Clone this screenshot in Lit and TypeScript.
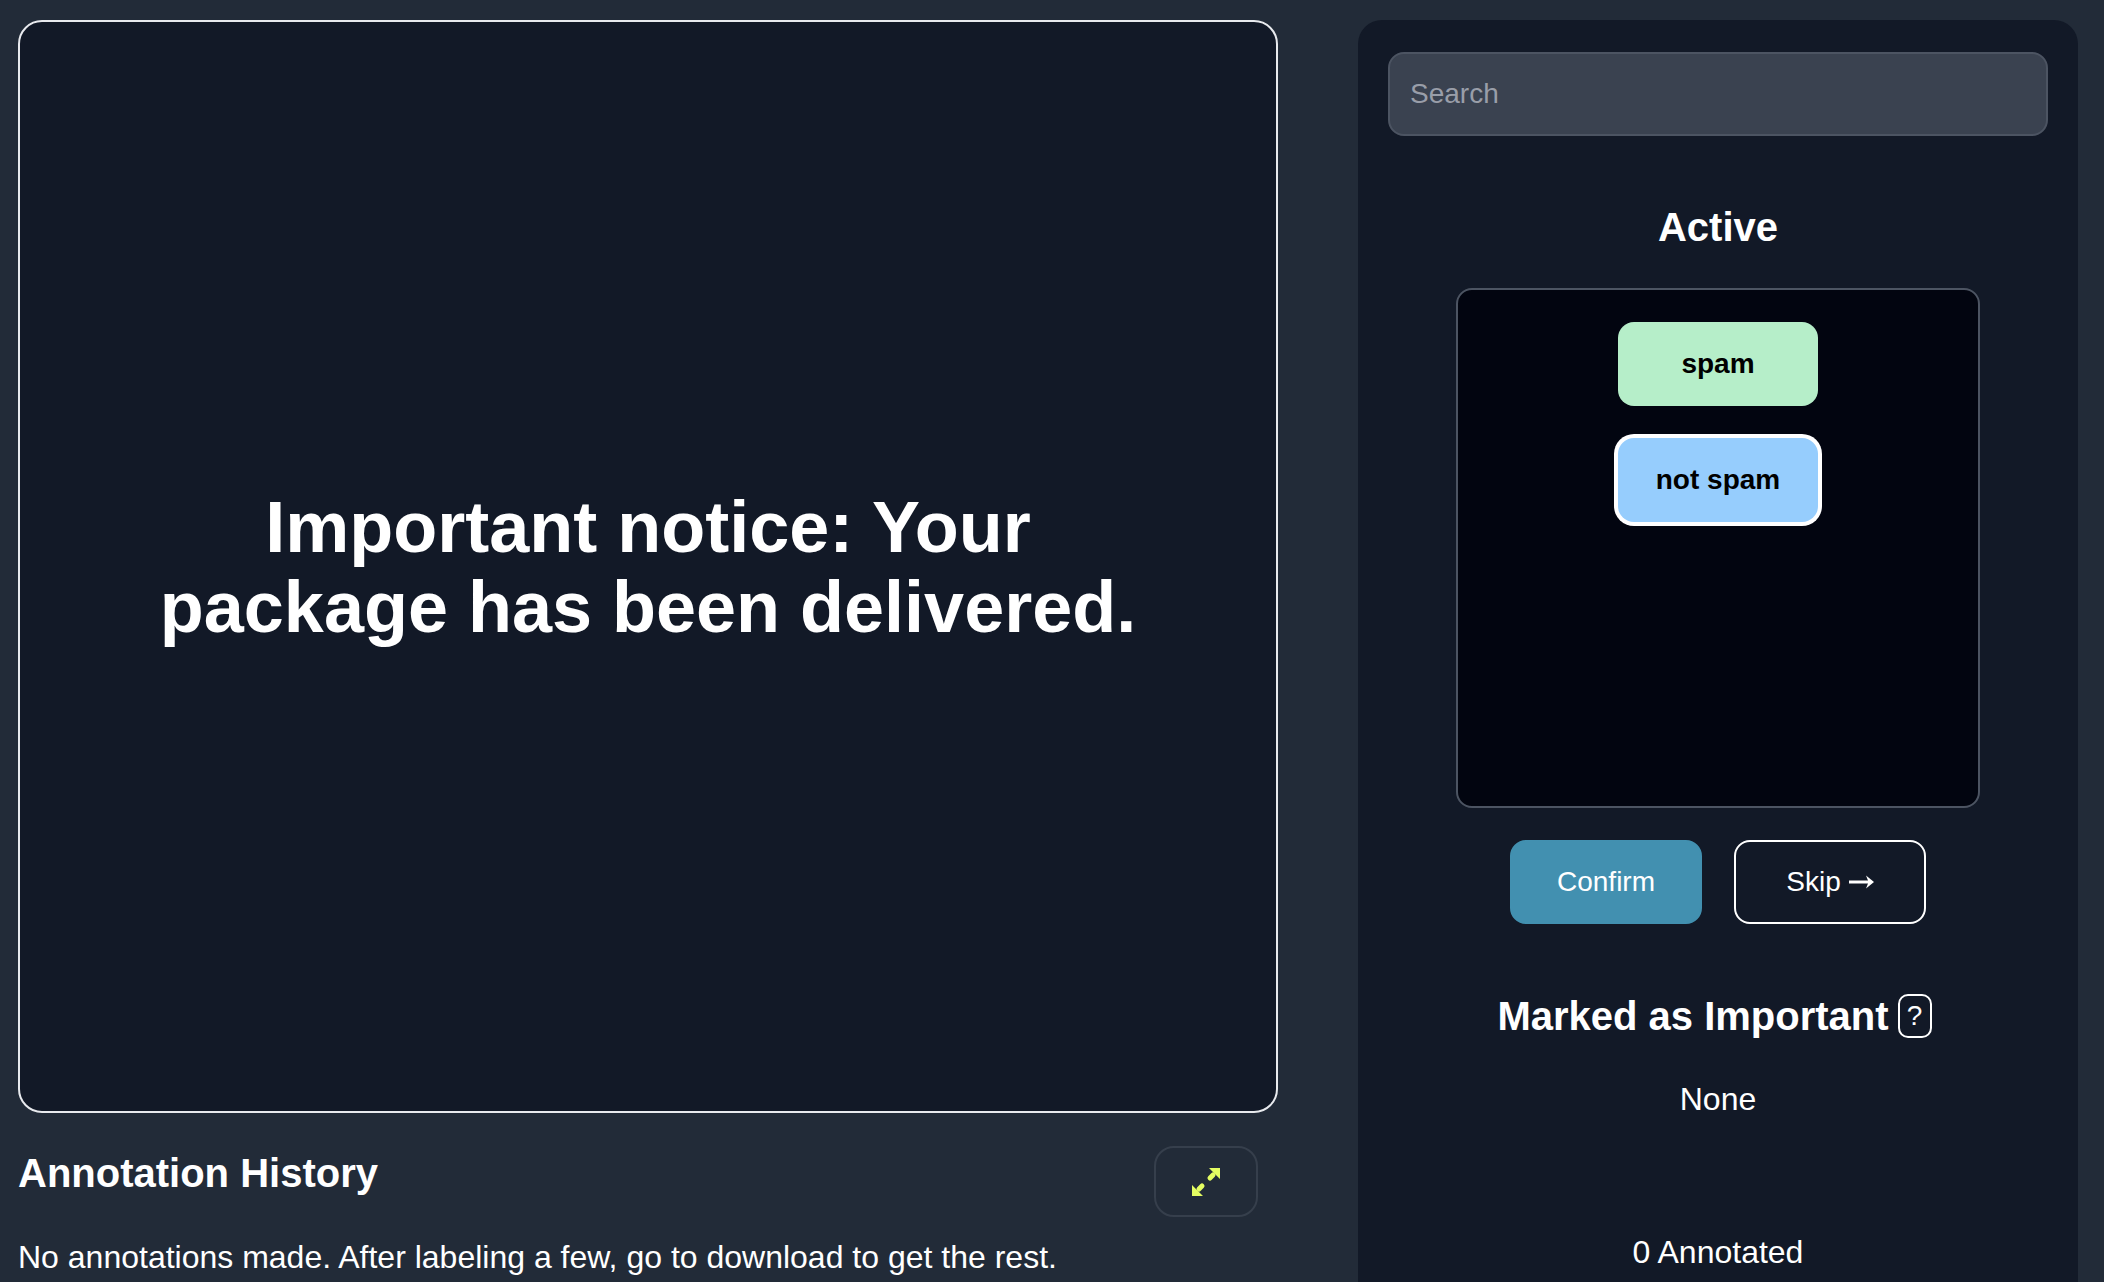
import { LitElement, html, css } from 'lit';
import { customElement } from 'lit/decorators.js';

@customElement('app-root')
export class AppRoot extends LitElement {
  static styles = css`
    :host {
      display: block;
      height: 1282px;
      overflow: hidden;
      background: #222b38;
      color: #fff;
      font-family: 'Liberation Sans', Arial, sans-serif;
    }

    .page {
      display: grid;
      grid-template-columns: 1260px 720px;
      column-gap: 80px;
      padding: 20px 0 0 18px;
    }

    .card {
      box-sizing: border-box;
      height: 1093px;
      display: flex;
      align-items: center;
      justify-content: center;
      background: #121927;
      border: 2px solid #e8eaee;
      border-radius: 24px;
      padding: 0 100px;
    }

    .card p {
      margin: 0;
      font-size: 72px;
      line-height: 80px;
      font-weight: 700;
      text-align: center;
    }

    .history-head {
      display: flex;
      align-items: center;
      justify-content: space-between;
      margin-top: 33px;
      padding-right: 20px;
    }

    .history-head h2 {
      margin: -17px 0 0;
      font-size: 40px;
      line-height: 48px;
      font-weight: 700;
    }

    .expand {
      box-sizing: border-box;
      width: 104px;
      height: 71px;
      display: flex;
      align-items: center;
      justify-content: center;
      background: transparent;
      border: 2px solid #363f4c;
      border-radius: 20px;
      padding: 0;
    }

    .history-empty {
      margin: 16px 0 0;
      font-size: 32px;
      line-height: 48px;
    }

    .panel {
      box-sizing: border-box;
      background: #121927;
      border-radius: 24px 24px 0 0;
      padding: 32px 30px 40px;
      display: flex;
      flex-direction: column;
      align-items: center;
    }

    .search {
      box-sizing: border-box;
      width: 660px;
      height: 84px;
      background: #3a4250;
      border: 2px solid #4c5462;
      border-radius: 16px;
      padding: 0 20px;
      font: 28px 'Liberation Sans', Arial, sans-serif;
      color: #fff;
      outline: none;
    }

    .search::placeholder {
      color: #999ea9;
    }

    h3 {
      margin: 0;
      font-size: 40px;
      line-height: 48px;
      font-weight: 700;
    }

    .active-title {
      margin-top: 67px;
    }

    .labels {
      box-sizing: border-box;
      width: 524px;
      height: 520px;
      margin-top: 37px;
      background: #020510;
      border: 2px solid #4c5462;
      border-radius: 16px;
      padding: 32px 0;
      display: flex;
      flex-direction: column;
      align-items: center;
      gap: 32px;
    }

    .label {
      width: 200px;
      height: 84px;
      border: 0;
      border-radius: 16px;
      font: 700 28px 'Liberation Sans', Arial, sans-serif;
      color: #000;
    }

    .label.green {
      background: #b6eec9;
    }

    .label.blue {
      background: #96cdfd;
      box-shadow: 0 0 0 4px #fff;
    }

    .actions {
      display: flex;
      gap: 32px;
      margin-top: 32px;
    }

    .action {
      box-sizing: border-box;
      width: 192px;
      height: 84px;
      display: flex;
      align-items: center;
      justify-content: center;
      gap: 8px;
      padding: 0;
      border-radius: 16px;
      font: 28px 'Liberation Sans', Arial, sans-serif;
      color: #fff;
      background: transparent;
      border: 2px solid #fff;
    }

    .action.primary {
      background: #4290b0;
      border-color: #4290b0;
    }

    .important {
      display: flex;
      align-items: center;
      gap: 9px;
      margin-top: 68px;
      padding-right: 7px;
    }

    .help {
      box-sizing: border-box;
      width: 34px;
      height: 44px;
      display: flex;
      align-items: center;
      justify-content: center;
      border: 2px solid #fff;
      border-radius: 10px;
      font-size: 28px;
    }

    .line {
      font-size: 32px;
      line-height: 48px;
    }

    .none {
      margin-top: 35px;
    }

    .count {
      margin-top: 105px;
    }
  `;

  render() {
    return html`
      <div class="page">
        <main>
          <div class="card">
            <p>Important notice: Your package has been delivered.</p>
          </div>
          <div class="history-head">
            <h2>Annotation History</h2>
            <button class="expand" aria-label="Expand">
              <svg width="28" height="28" viewBox="0 0 28 28">
                <path fill="#e4fd62" d="M17 0H28V11ZM0 28V17L11 28Z" />
                <path stroke="#e4fd62" stroke-width="5" stroke-linecap="round" d="M21 7 18 10M7 21 10 18" />
              </svg>
            </button>
          </div>
          <p class="history-empty">No annotations made. After labeling a few, go to download to get the rest.</p>
        </main>
        <aside class="panel">
          <input class="search" placeholder="Search" />
          <h3 class="active-title">Active</h3>
          <div class="labels">
            <button class="label green">spam</button>
            <button class="label blue">not spam</button>
          </div>
          <div class="actions">
            <button class="action primary">Confirm</button>
            <button class="action">
              Skip
              <svg width="25" height="14" viewBox="0 0 25 14">
                <path fill="#fff" d="M0 5.5H19L17 0.5 25 7 17 13.5 19 8.5H0Z" />
              </svg>
            </button>
          </div>
          <div class="important">
            <h3>Marked as Important</h3>
            <span class="help">?</span>
          </div>
          <div class="line none">None</div>
          <div class="line count">0 Annotated</div>
        </aside>
      </div>
    `;
  }
}
